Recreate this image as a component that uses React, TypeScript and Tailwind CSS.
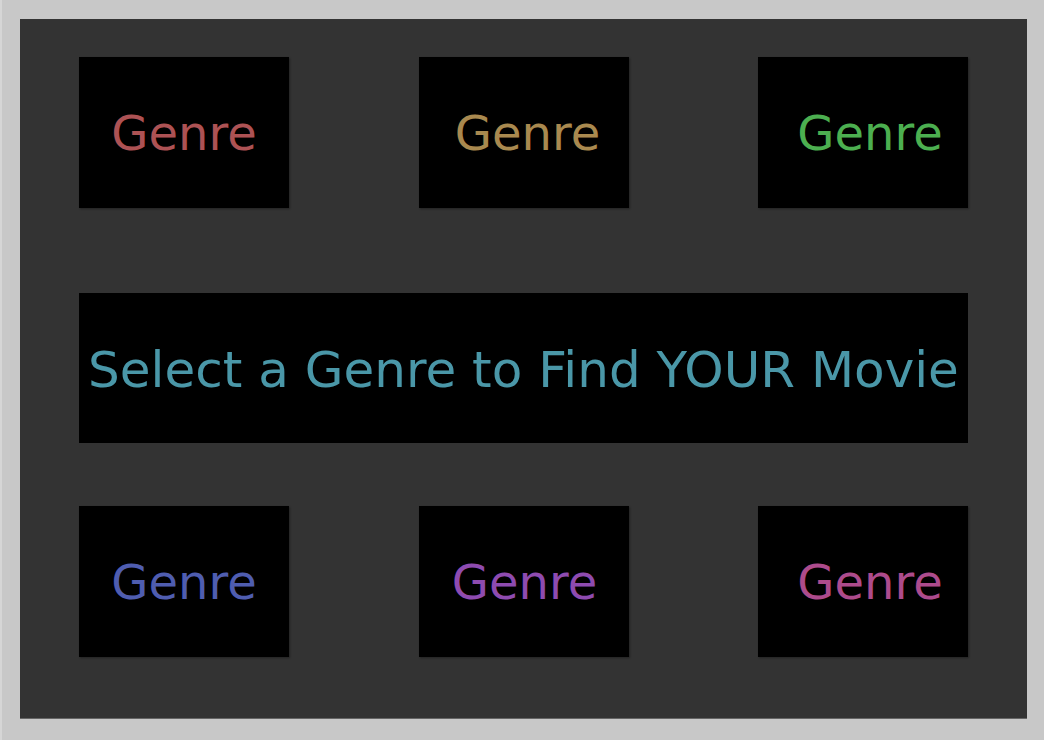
import React from "react";

const font = { fontFamily: '"DejaVu Sans", sans-serif' };

function Box({ color, label, pad }: { color: string; label: string; pad: string }) {
  return (
    <div className={`w-[210px] h-[151px] bg-black flex items-center justify-center shadow-[1px_1px_2px_rgba(0,0,0,0.35)] ${pad}`}>
      <span className={`text-[48px] leading-none ${color}`}>{label}</span>
    </div>
  );
}

export default function App() {
  return (
    <div
      className="w-[1044px] h-[740px] bg-[#c8c8c8] border-l-2 border-[#d6d6d6] pl-[18px] pt-[19px]"
      style={font}
    >
      <div className="w-[1007px] h-[699px] bg-[#333333] shadow-[0_1px_0_#666] pt-[38px] px-[59px]">
        <div className="flex justify-between">
          <Box color="text-[#ad5254]" label="Genre" pad="pl-0" />
          <Box color="text-[#a9894f]" label="Genre" pad="pl-[8px]" />
          <Box color="text-[#4caf50]" label="Genre" pad="pl-[14px]" />
        </div>
        <div className="mt-[85px] h-[150px] bg-black flex items-center justify-center pt-[4px]">
          <span className="text-[50px] leading-none text-[#4a97a8]">
            Select a Genre to Find YOUR Movie
          </span>
        </div>
        <div className="mt-[63px] flex justify-between">
          <Box color="text-[#4f5db0]" label="Genre" pad="pl-0" />
          <Box color="text-[#8e4bb0]" label="Genre" pad="pl-[2px]" />
          <Box color="text-[#ad4b8c]" label="Genre" pad="pl-[14px]" />
        </div>
      </div>
    </div>
  );
}
